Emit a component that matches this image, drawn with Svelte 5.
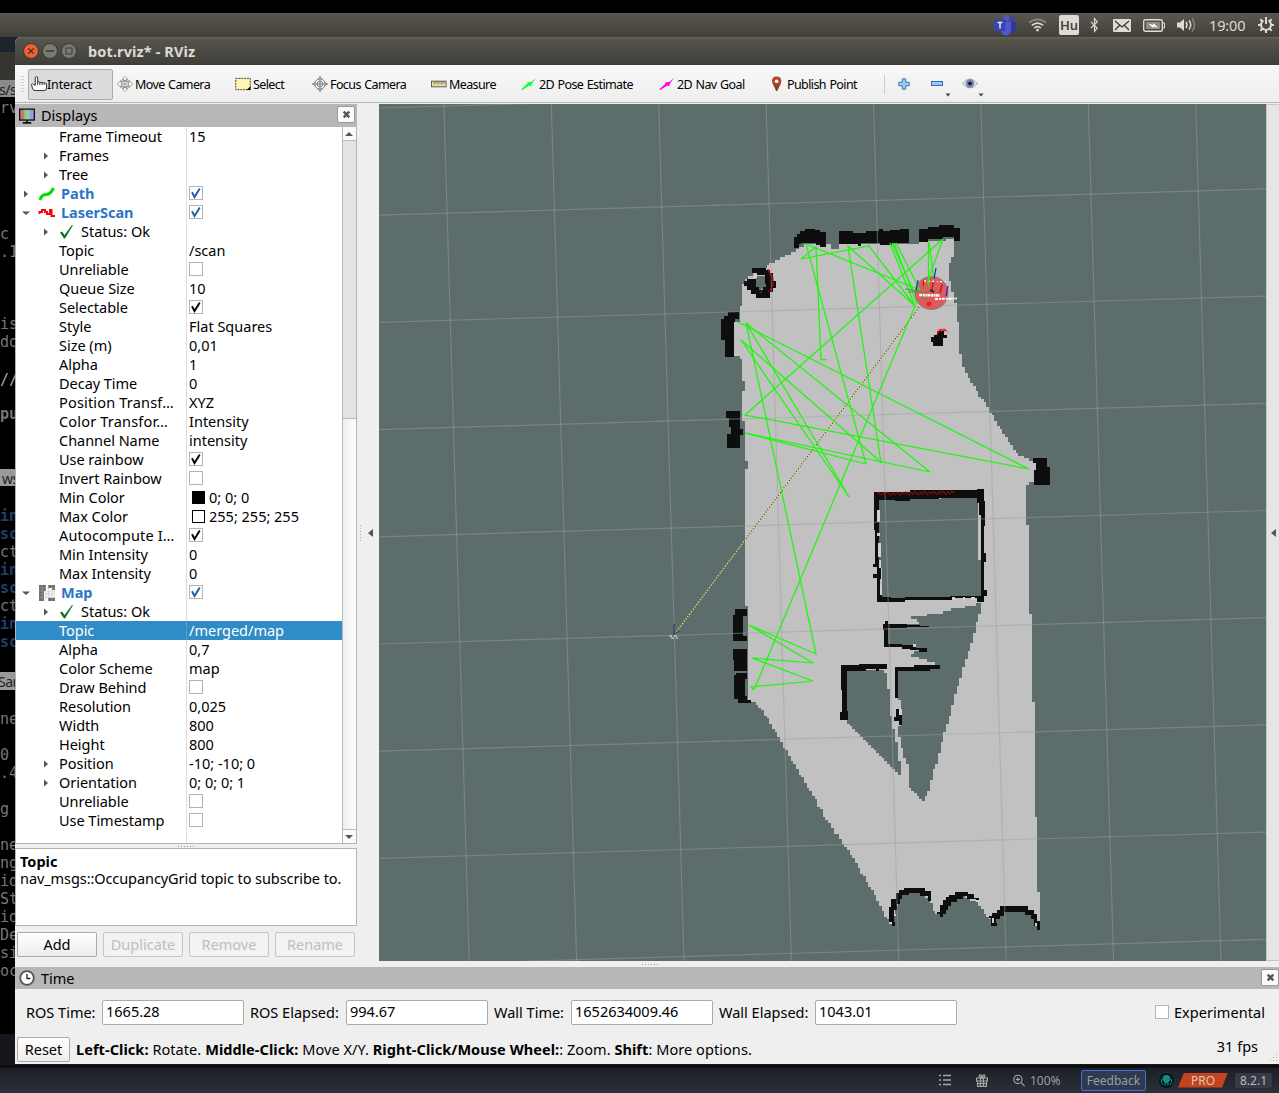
<script>
  const tree = [
    { label: 'Frame Timeout', value: '15' },
    { label: 'Frames', arrow: 'right' },
    { label: 'Tree', arrow: 'right' },
    { label: 'Path', kind: 'display', icon: 'path', arrow: 'right', check: true, blue: true },
    { label: 'LaserScan', kind: 'display', icon: 'scan', arrow: 'down', check: true, blue: true },
    { label: 'Status: Ok', kind: 'status', arrow: 'right' },
    { label: 'Topic', value: '/scan' },
    { label: 'Unreliable', check: false },
    { label: 'Queue Size', value: '10' },
    { label: 'Selectable', check: true },
    { label: 'Style', value: 'Flat Squares' },
    { label: 'Size (m)', value: '0,01' },
    { label: 'Alpha', value: '1' },
    { label: 'Decay Time', value: '0' },
    { label: 'Position Transf…', value: 'XYZ', long: true },
    { label: 'Color Transfor…', value: 'Intensity', long: true },
    { label: 'Channel Name', value: 'intensity' },
    { label: 'Use rainbow', check: true },
    { label: 'Invert Rainbow', check: false },
    { label: 'Min Color', value: '0; 0; 0', swatch: 'dark' },
    { label: 'Max Color', value: '255; 255; 255', swatch: 'light' },
    { label: 'Autocompute I…', check: true, long: true },
    { label: 'Min Intensity', value: '0' },
    { label: 'Max Intensity', value: '0' },
    { label: 'Map', kind: 'display', icon: 'map', arrow: 'down', check: true, blue: true },
    { label: 'Status: Ok', kind: 'status', arrow: 'right' },
    { label: 'Topic', value: '/merged/map', selected: true },
    { label: 'Alpha', value: '0,7' },
    { label: 'Color Scheme', value: 'map' },
    { label: 'Draw Behind', check: false },
    { label: 'Resolution', value: '0,025' },
    { label: 'Width', value: '800' },
    { label: 'Height', value: '800' },
    { label: 'Position', value: '-10; -10; 0', arrow: 'right' },
    { label: 'Orientation', value: '0; 0; 0; 1', arrow: 'right' },
    { label: 'Unreliable', check: false },
    { label: 'Use Timestamp', check: false }
  ];

  // Fragments of the terminal that show beside the window: [text, x, baseline, class]
  const terminal = [
    ['s/s', -1, 95, 'tab'], ['rv', 0, 113, ''], ['c', 0, 239, ''], ['.1', 0, 257, ''], ['is', 0, 329, ''], ['do', 0, 347, ''],
    ['//', 0, 385, 'lite'], ['pu', 0, 419, 'bold'], ['ws', 2, 484, 'tab'], ['in', 0, 521, 'blue'], ['sc', 0, 539, 'blue'],
    ['ct', 0, 557, ''], ['in', 0, 575, 'blue'], ['sc', 0, 593, 'blue'], ['ct', 0, 611, ''], ['in', 0, 629, 'blue'],
    ['sc', 0, 647, 'blue'], ['Sar', -2, 687, 'tab'], ['ne', 0, 724, ''], ['0', 0, 760, ''], ['.4', 0, 778, ''], ['g', 0, 814, ''],
    ['ne', 0, 850, ''], ['ng', 0, 868, ''], ['id', 0, 886, ''], ['St', 0, 904, ''], ['id', 0, 922, ''], ['De', 0, 940, ''],
    ['si', 0, 958, ''], ['oc', 0, 976, '']
  ];

  const fields = [
    ['ROS Time:', '1665.28', 'f1'],
    ['ROS Elapsed:', '994.67', 'f2'],
    ['Wall Time:', '1652634009.46', 'f3'],
    ['Wall Elapsed:', '1043.01', 'f4']
  ];

  // Turns an outline into the staircase of an occupancy grid
  const CELL = 2.68;
  function stair(points) {
    const snap = (v) => Math.round(v / CELL) * CELL;
    const pts = [...points, points[0]];
    let d = '';
    let last = null;
    for (let i = 0; i < pts.length - 1; i++) {
      const [ax, ay] = pts[i];
      const [bx, by] = pts[i + 1];
      const n = Math.max(1, Math.ceil(Math.hypot(bx - ax, by - ay) / CELL));
      for (let k = 0; k <= n; k++) {
        const x = snap(ax + ((bx - ax) * k) / n);
        const y = snap(ay + ((by - ay) * k) / n);
        if (!last) d += `M${x.toFixed(1)} ${y.toFixed(1)}`;
        else if (x !== last[0] || y !== last[1]) d += `H${x.toFixed(1)}V${y.toFixed(1)}`;
        last = [x, y];
      }
    }
    return d + 'Z';
  }

  const free = stair([
    [797, 249], [805, 243], [828, 243], [831, 249], [838, 249], [840, 243], [919, 244], [922, 241], [944, 240], [953, 237],
    [955, 243], [955, 256], [949, 264], [949, 273], [951, 290], [954, 296], [957, 316], [960, 335], [961, 358],
    [964, 370], [972, 385], [985, 405], [1003, 434], [1017, 454], [1030, 460], [1036, 462], [1036, 483],
    [1026, 484], [1028, 530], [1030, 600], [1033, 700], [1035, 762], [1036, 830], [1038, 870], [1039, 922],
    [1035, 920], [1028, 911], [1016, 908], [1000, 911], [995, 922], [990, 919], [978, 901], [962, 895],
    [950, 900], [940, 915], [934, 911], [930, 898], [914, 890], [899, 898], [893, 920], [888, 921],
    [876, 895], [850, 852], [824, 815], [812, 791], [790, 756], [765, 712], [755, 702], [748, 698],
    [748, 608], [745, 604], [745, 475], [747, 468], [743, 410], [744, 382], [741, 358], [735, 356],
    [735, 322], [740, 320], [741, 306], [742, 290], [746, 278], [768, 264], [786, 255]
  ]);
  const holes = [
    [[879, 499], [977, 496], [981, 597], [882, 599], [880, 560]],
    [[982, 603], [945, 612], [912, 618], [920, 624], [888, 627], [888, 645], [918, 650], [912, 656], [934, 664],
      [930, 669], [898, 671], [898, 698], [901, 708], [901, 725], [898, 732], [903, 755], [909, 772], [909, 788],
      [924, 802], [931, 780], [944, 735], [953, 702], [967, 655], [976, 625]],
    [[846, 670], [885, 669], [889, 695], [892, 725], [897, 745], [901, 776], [893, 768], [870, 745], [846, 720]],
    [[755, 276], [760, 275], [766, 275], [766, 288], [762, 291], [755, 289]]
  ].map((p) => stair(p));

  const walls = [
    'M794 237H797V234H800V231H805V229H815V230H820V232H826V247H820V245H816V243H801V244H799V248H794Z',
    'M839 231H853V233H866V231H879V229H883V231H890V230H900V229H909V243H892V245H880V243H861V246H858V244H839Z',
    'M919 229H928V227H939V225H954V228H960V241H954V237H943V239H928V242H919Z',
    'M752 268H766V270H770V273H773V281H776V288H773V292H770V298H756V294H751V290H747V286H744V281H747V279H756V287H759V290H763V287H766V284H765V275H757V273H752Z',
    'M724 316H728V312H739V319H735V322H734V357H725V340H721V319H724Z',
    'M726 411H740V429H743V435H740V448H727V434H731V427H729V418H726Z',
    'M735 609H747V616H743V636H747V641H733V615H735Z',
    'M733 649H747V671H734Z',
    'M736 673H747V679H745V696H747V700H751V703H738V699H734V675H736Z',
    'M1033 458H1047V467H1050V485H1034V470H1036V463H1033Z',
    'M934 335H937V331H944V335H947V338H943V346H933V342H931V337H934Z',
    'M874 492H910V490H977V489H984V501H985V526H984V553H986V562H984V590H987V596H984V602H977V598H952V600H905V602H877V578H873V574H877V567H873V564H875V530H874Z M879 500V564H881V579H880V595H882V597H891V598H905V597H950V596H981V515H979V503H977V498H939V499H910V501Z',
    'M883 624H885V621H888V624H907V625H920V626H929V627H907V628H888V644H902V645H916V648H927V652H919V650H910V649H902V647H884V630H883Z',
    'M841 665H859V664H887V669H879V671H876V669H866V671H847V711H848V720H840V712H842V690H841Z',
    'M895 667H914V665H940V669H930V671H898V698H895Z',
    'M896 709H899V715H902V725H899V721H894V717H896Z',
    'M889 925V907H891V899H896V893H899V890H904V888H925V891H931V901H928V896H920V893H909V895H902V899H900V904H897V910H894V922H895V926H892V924H889Z',
    'M937 912H940V905H943V900H946V897H949V895H955V892H968V894H974V898H979V902H976V899H967V896H963V899H957V902H951V906H948V910H946V914H943V917H940V914H937Z',
    'M989 916H992V913H997V910H1000V906H1028V910H1034V914H1037V921H1040V930H1037V926H1034V919H1031V915H1025V912H1004V916H1000V919H996V923H997V926H991V918H989Z'
  ];

  const rays = [
    '806,244 866,464', '806,244 920,290', '801,259 816,247 821,359.500 827,359.500', '801,259 869,246 915,306',
    '881,463 848,246 915,306', '890,243 915,306', '892,243 913,290', '896,243 920,290', '928.500,242 928.500,286',
    '929,242 934,280', '943,239 745,415 1029,469 738,322', '943,239 927,283', '915,306 754,690', '746,323 816,654 749,625 813,663 752,658 813,681 751,687 754,690',
    '746,323 930,472 745,433', '746,323 849,497', '741,340 882,463', '741,340 849,497', '745,433 866,464', '894,243 917,304'
  ];

  const cols = Array.from({ length: 9 }, (_, i) => 336.5 + i * 107.4);
  const rows = Array.from({ length: 10 }, (_, i) => 108 + i * 107.2);
  const specks = Array.from({ length: 42 }, (_, i) => [877 + i * 1.85, 493 - i * 0.03 + ((i * 7) % 5) * 0.6 - 1]);
</script>

{#snippet tick()}
  <svg viewBox="0 0 12 12"><path d="M2 5.300 4.500 10 9.800 1.500" fill="none" stroke="currentColor" stroke-width="1.900" /></svg>
{/snippet}

{#snippet closeBox()}
  <span class="closebox"><svg viewBox="0 0 16 16"><path d="M5 5l6 6M11 5l-6 6" stroke="#555" stroke-width="2.600" /></svg></span>
{/snippet}

<div class="screen">
  <header class="panel">
    <svg class="teams" viewBox="0 0 22 20">
      <circle cx="18.500" cy="4" r="2.500" fill="#3b41b0" /><path d="M14 7h8v7a4 4 0 0 1-6 3z" fill="#3137a0" />
      <circle cx="12.500" cy="3" r="3" fill="#5059c9" /><path d="M8 7h9v8a5 5 0 0 1-10 1z" fill="#5059c9" />
      <rect y="4.500" width="11.500" height="11.500" rx="1" fill="#3b43b4" /><path d="M3.500 7.500h5M6 7.500v6" stroke="#e4e4f4" stroke-width="1.500" />
    </svg>
    <svg class="wifi" viewBox="0 0 20 14" fill="none" stroke="#dfdbd2" stroke-width="1.700">
      <path d="M1 4.500q9-7 18 0" opacity=".45" /><path d="M4 7.500q6-5 12 0M6.500 10.300q3.500-3 7 0" /><circle cx="10" cy="12.500" r=".6" />
    </svg>
    <span class="lang">Hu</span>
    <svg class="bt" viewBox="0 0 10 16" fill="none" stroke="#dfdbd2" stroke-width="1.300"><path d="M1 4.500l7 7L5 15V1l3 3.500-7 7" /></svg>
    <svg class="mail" viewBox="0 0 18 13"><rect width="18" height="13" rx="1" fill="#dfdbd2" /><path d="M2 2l7 6 7-6M2 11l4.500-4.500M16 11l-4.500-4.500" fill="none" stroke="#3d3c38" stroke-width="1.300" /></svg>
    <svg class="battery" viewBox="0 0 22 13"><rect x=".7" y=".7" width="18.600" height="11.600" rx="1.500" fill="none" stroke="#dfdbd2" stroke-width="1.400" /><rect x="3" y="3" width="14" height="7" fill="#8f8c85" /><path d="M20 4h1.500v5H20" stroke="#dfdbd2" fill="none" /><path d="M5 4.500l5 1.500V4l5.500 5-5-1.500v1.800z" fill="#fff" /></svg>
    <svg class="vol" viewBox="0 0 20 16"><path d="M0 5.500h3L7 2v12L3 10.500H0z" fill="#dfdbd2" /><g fill="none" stroke="#dfdbd2" stroke-width="1.500"><path d="M9 5q2 3 0 6M12 3.500q3.500 4.500 0 9" /><path d="M15 1.500q5 6.500 0 13" opacity=".4" /></g></svg>
    <span class="clock">19:00</span>
    <svg class="gear" viewBox="0 0 16 16" fill="none" stroke="#dfdbd2"><path d="M5.500 3.500a5 5 0 1 0 5 0M8 0v7" stroke-width="1.900" /><path d="M2.300 2.300l2 2M0 8h3M2.300 13.700l2-2M8 13v3M13.700 13.700l-2-2M13 8h3M13.700 2.300l-2 2" stroke-width="2" /></svg>
  </header>

  <div class="desktop">
    <svg class="terminal" viewBox="0 37 15 1027" width="15" height="1027">
      <rect y="37" width="15" height="1027" fill="#000" />
      <rect y="37" width="15" height="15" fill="#1d222c" />
      <rect y="52" width="15" height="28" fill="#353430" />
      <rect y="80" width="15" height="17" fill="#8b8b8b" />
      <rect y="469" width="15" height="17" fill="#9a9a9a" />
      <rect y="672" width="15" height="18" fill="#9a9a9a" />
      <rect y="1034" width="15" height="30" fill="#14161b" />
      {#each terminal as [text, x, y, tone]}<text {x} {y} class={tone}>{text}</text>{/each}
    </svg>

    <section class="window">
      <div class="title">
        <svg viewBox="0 0 54 16" width="54" height="16">
          <circle cx="8" cy="8" r="7.500" fill="#ee5f35" stroke="#3a3934" /><path d="M5.300 5.300l5.400 5.400M10.700 5.300l-5.400 5.400" stroke="#41271c" stroke-width="1.200" />
          <circle cx="27" cy="8" r="7.500" fill="#7b7a72" stroke="#3a3934" /><path d="M23 8h8" stroke="#3a3934" stroke-width="1.300" />
          <circle cx="46" cy="8" r="7.500" fill="#7b7a72" stroke="#3a3934" /><rect x="43" y="5" width="6" height="6" fill="none" stroke="#3a3934" />
        </svg>
        <b>bot.rviz* - RViz</b>
      </div>

      <nav class="toolbar">
        <span class="grip"></span>
        <span class="tool active">
          <svg viewBox="0 0 17 17"><path d="M4.500 10V2a1.300 1.300 0 0 1 2.600 0V6.500q1.500-1 2.300.300 1.300-.8 2.200.4 1.400-.8 2.300.300 2-.6 2.600 1V13q0 2.500-2.500 2.500H4.500Q2 15.500 1.500 13L.500 9q1-1.500 2.300 0z" fill="#fff" stroke="#222" /><path d="M7.100 6.500v3M9.400 7v2.500M11.700 7.500v2M14 7.500v2" stroke="#222" /></svg>Interact</span>
        <span class="tool"><svg viewBox="0 0 17 17" fill="#fff" stroke="#777" stroke-width=".8"><path d="M8.500.500l3 3-2 .5v2l3.500.500-.3-2 3.800 4-3.800 4 .3-2-3.500.500v2l2 .5-3 3-3-3 2-.5v-2L4 10.500l.3 2-3.800-4 3.800-4L4 6.500l3.500-.500v-2l-2-.5z" /><circle cx="8.500" cy="8.500" r="4" fill="none" /><path d="M5 8.500h7M8.500 5v7" /></svg>Move Camera</span>
        <span class="tool"><svg viewBox="0 0 17 17"><rect x=".8" y="2.500" width="15.400" height="12" fill="#fff5ae" stroke="#333" stroke-dasharray="2 1" /><path d="M16.500 11v4h-4z" /></svg>Select</span>
        <span class="tool"><svg viewBox="0 0 17 17" fill="none" stroke="#777"><circle cx="8.500" cy="8.500" r="5.500" /><circle cx="8.500" cy="8.500" r="3" /><path d="M8.500 0v17M0 8.500h17" /><path d="M6.500 3L8.500.500l2 2.500M6.500 14l2 2.500 2-2.500M3 6.500l-2.500 2L3 10.500M14 6.500l2.500 2-2.500 2" stroke-width=".7" /></svg>Focus Camera</span>
        <span class="tool"><svg viewBox="0 0 17 17"><rect x=".5" y="5.500" width="15.500" height="6" fill="#e8e0a0" stroke="#555" /><path d="M3.500 6v3M5.500 6v2M7.500 6v3M9.500 6v2M11.500 6v3M13.500 6v2" stroke="#555" stroke-width=".8" /></svg>Measure</span>
        <span class="tool"><svg viewBox="0 0 17 17"><path d="M0 14.500L7 8 6 6.800l5-.3L16 2l-4 5.500-1.500 4-1.200-1.700-8 5.200z" fill="#0f3" /></svg>2D Pose Estimate</span>
        <span class="tool"><svg viewBox="0 0 17 17"><path d="M0 14.500L7 8 6 6.800l5-.3L16 2l-4 5.500-1.500 4-1.200-1.700-8 5.200z" fill="#f0d" /></svg>2D Nav Goal</span>
        <span class="tool pin"><svg viewBox="0 0 17 17"><path d="M6 0.500q5 0 5 5 0 3-2.500 6.500L6.500 16h-1L4 12Q1 8 1 5.500q0-5 5-5z" fill="#b5482a" /><path d="M2.500 9h7L6.500 16h-1z" fill="#7a4a28" /><circle cx="6" cy="5.500" r="1.900" fill="#fff" /></svg>Publish Point</span>
        <span class="rule"></span>
        <svg class="mini" viewBox="0 0 16 16"><path d="M6 2h4v4h4v4h-4v4H6v-4H2V6h4z" fill="#9fc6f0" stroke="#2f6bb3" /></svg>
        <svg class="mini wide" viewBox="0 0 24 24"><rect x="2.500" y="9.500" width="11" height="4" fill="#9fc6f0" stroke="#2f6bb3" /><path d="M16.500 21.500h5l-2.500 3z" fill="#444" /></svg>
        <svg class="mini wide eye" viewBox="0 0 24 24"><path d="M.500 11.500q7.500-9 15 0-7.500 9-15 0z" fill="#e6e6ea" stroke="#aaa" /><circle cx="8" cy="11.500" r="4.200" fill="#7482b8" /><circle cx="8" cy="11.500" r="1.800" fill="#111" /><path d="M16.500 21.500h5l-2.500 3z" fill="#444" /></svg>
      </nav>

      <div class="main">
        <aside class="dock">
          <div class="dockhead">
            <svg viewBox="0 0 17 17" width="16" height="16"><defs><linearGradient id="rgb"><stop offset=".3" stop-color="#c77" /><stop offset=".34" stop-color="#8c8" /><stop offset=".64" stop-color="#8d8" /><stop offset=".7" stop-color="#99e" /></linearGradient></defs><rect x=".7" y="1.200" width="15.600" height="11.600" fill="url(#rgb)" stroke="#111" stroke-width="1.400" /><path d="M8.500 13v2.500M4 15.800h9" stroke="#111" stroke-width="1.800" /></svg>
            <span>Displays</span>{@render closeBox()}
          </div>
          <div class="treebox">
            <div class="tree">
              {#each tree as row}
                <div class="row {row.kind ?? 'prop'}" class:selected={row.selected}>
                  <div class="name">
                    <span class="arrow">
                      {#if row.arrow === 'right'}<svg viewBox="0 0 8 8"><path d="M2 .500L6 4 2 7.500z" fill="#555" /></svg>{/if}
                      {#if row.arrow === 'down'}<svg viewBox="0 0 8 8"><path d="M0 2.500h8L4 6z" fill="#555" /></svg>{/if}
                    </span>
                    {#if row.icon === 'path'}<svg class="ico" viewBox="0 0 16 16"><path d="M1 14q1.500-5.500 6-5.500T14.500 2" fill="none" stroke="#0d0" stroke-width="3" /></svg>{/if}
                    {#if row.icon === 'scan'}<svg class="ico" viewBox="0 0 16 16"><path d="M.500 9V7H3V5h3v2h2v2h3V5h1.500v6H16" fill="none" stroke="red" stroke-width="1.900" /></svg>{/if}
                    {#if row.icon === 'map'}<svg class="ico" viewBox="0 0 16 16"><path d="M0 0h7v6H5v10H0zM9 0h7v5h-3V3H9zM9 13h7v3H9z" fill="#6c6c6c" /><path d="M7 6h9v7H7z" fill="#eee" /><path d="M0 3h16M0 6h16M0 9h16M0 12.500h16M3 0v16M6.500 0v16M9.500 0v16M13 0v16" stroke="#bbb" stroke-width=".4" /></svg>{/if}
                    {#if row.kind === 'status'}<svg class="ico" viewBox="0 0 16 16"><path d="M1 8.500l2-1L5.500 11 13 1l1 .300L6 14.500H5z" fill="#117317" /></svg>{/if}
                    <span class="text" class:long={row.long}>{row.label}</span>
                  </div>
                  <div class="value">
                    {#if row.check !== undefined}<span class="check" class:blue={row.blue}>{#if row.check}{@render tick()}{/if}</span>{/if}
                    {#if row.swatch}<span class="swatch {row.swatch}"></span>{/if}
                    {row.value ?? ''}
                  </div>
                </div>
              {/each}
            </div>
            <div class="scroll">
              <span class="cap"><svg viewBox="0 0 8 8"><path d="M0 6h8L4 2z" fill="#555" /></svg></span>
              <span class="thumb"></span><span class="track"></span>
              <span class="cap end"><svg viewBox="0 0 8 8"><path d="M0 2h8L4 6z" fill="#555" /></svg></span>
            </div>
          </div>
          <div class="split"><i></i></div>
          <div class="help"><b>Topic</b><span>nav_msgs::OccupancyGrid topic to subscribe to.</span></div>
          <div class="buttons"><button>Add</button><button disabled>Duplicate</button><button disabled>Remove</button><button disabled>Rename</button></div>
        </aside>

        <div class="handle"><i></i><svg viewBox="0 0 5 8"><path d="M5 0v8L0 4z" fill="#555" /></svg></div>

        <svg class="view" viewBox="379 104 887 857" width="887" height="857">
          <rect x="379" y="104" width="887" height="857" fill="#5d6d6b" />
          <g shape-rendering="crispEdges">
            <path d={free} fill="#c1c1c1" />
            {#each holes as d}<path {d} fill="#5d6d6b" />{/each}
            {#each walls as d}<path {d} fill="#0e0e0e" fill-rule="evenodd" />{/each}
            <path d="M877 510h3v12h-3zM877 533h3v3h-3zM878 543h3v14h-3zM879 560h2v8h-2zM880 585h2v10h-2zM952 597h3v3h-3zM963 597h2v3h-2zM971 597h4v3h-4zM913 644h3v3h-3zM894 914h2v2h-2zM889 922h3v2h-3zM992 918h2v5h-2zM1035 923h2v3h-2zM899 709h3v6h-3zM976 900h3v2h-3zM754 275h3v3h-3z" fill="#d0d0d0" />
          </g>
          <g class="grid">
            {#each cols as x}<path d="M{x} 104L{x + 25.3} 961" />{/each}
            {#each rows as y}<path d="M379 {y}L1266 {y - 26.3}" />{/each}
          </g>
          <g class="laser">
            {#each specks as [x, y]}<rect {x} {y} width="1.600" height="1.200" />{/each}
            <path d="M768 269l2 5 3 3v7l-2 5-3 3M760 292h2M937 335l2-5 5-1 4 3M937 332l5-2 3 1" fill="none" stroke="red" stroke-width="1.100" stroke-dasharray="4 1" />
          </g>
          <path d="M674 635L920 306" stroke="#e3dfa0" stroke-width="1.100" /><path d="M674 635L920 306" stroke="#4b4a24" stroke-width="1.100" stroke-dasharray="1.300 1.700" />
          <circle cx="931.500" cy="293" r="16.500" fill="#de5b5b" stroke="#777" stroke-width=".8" />
          <g class="rays">{#each rays as points}<polyline {points} />{/each}</g>
          <g fill="none">
            <path d="M936 268l-2 11M918 280l-2 11M948 286l-2 10" stroke="#2222c4" stroke-width="1.200" />
            <path d="M933 282l-1 8M942 284l-2 9M924 280l-1 6" stroke="#c01818" stroke-width="1.400" />
            <path d="M905 289l14 2M908 292h8M919 293l8-1M922 298l5 2" stroke="#3a9a3a" /><path d="M930 290l4 2" stroke="#333" stroke-width="2" />
            <path d="M919 295l21 .5" stroke="#fff" stroke-width="2.600" stroke-dasharray="3 .7 2 .7 1.500 .5" />
            <path d="M935 299l22-.5" stroke="#fff" stroke-width="2" stroke-dasharray="3 1 2 .8" />
            <path d="M924 281l24 1" stroke="#fff" stroke-width="1.300" stroke-dasharray="2 3 1 2" />
            <circle cx="929" cy="304" r="2.500" fill="#e82222" />
          </g>
          <g fill="none"><path d="M674 635v-11" stroke="#1a2a70" /><path d="M674 634l5-3" stroke="#5a2020" /><path d="M669 636h10M671 638h7" stroke="#eee" stroke-dasharray="3 2" /></g>
        </svg>
        <div class="edge"><svg viewBox="0 0 5 8"><path d="M5 0v8L0 4z" fill="#555" /></svg></div>
      </div>

      <div class="split low"><i></i></div>
      <div class="dockhead timehead">
        <svg viewBox="0 0 16 16" width="16" height="16"><circle cx="8" cy="8" r="6.800" fill="#fff" stroke="#555" stroke-width="1.800" /><path d="M8 4v4.500h3.500" fill="none" stroke="#222" stroke-width="1.300" /></svg>
        <span>Time</span>{@render closeBox()}
      </div>
      <div class="times">
        {#each fields as [label, value, cls]}<label class={cls}><span>{label}</span><span class="input">{value}</span></label>{/each}
        <div class="exp"><span class="check"></span>Experimental</div>
      </div>
      <footer>
        <button>Reset</button>
        <p><b>Left-Click:</b> Rotate. <b>Middle-Click:</b> Move X/Y. <b>Right-Click/Mouse Wheel:</b>: Zoom. <b>Shift</b>: More options.</p>
        <span class="fps">31 fps</span>
        <svg class="corner" viewBox="0 0 8 8" fill="#aaa"><path d="M6 0h1v1H6zM3 3h1v1H3zM6 3h1v1H6zM0 6h1v1H0zM3 6h1v1H3zM6 6h1v1H6z" /></svg>
      </footer>
    </section>
  </div>

  <div class="taskbar">
    <svg class="t-list" viewBox="0 0 12 12" stroke="#a5a6a8" stroke-width="1.500"><path d="M0 1.500h2M4 1.500h8M0 6h2M4 6h8M0 10.500h2M4 10.500h8" /></svg>
    <svg class="t-gift" viewBox="0 0 12 13" fill="none" stroke="#a5a6a8" stroke-width="1.200"><path d="M.6 4h10.800v3H.6zM1.500 7v5.300h9V7M4.500 4v8M7.500 4v8M6 3.500Q2 3 3.500 1 5 0 6 3.500 7 0 8.500 1 10 3 6 3.500M1.500 9.500h9" /></svg>
    <svg class="t-zoom" viewBox="0 0 13 13" fill="none" stroke="#a5a6a8" stroke-width="1.200"><circle cx="5.300" cy="5.300" r="4.500" /><path d="M8.600 8.600l4 4M3 5.300h4.600M5.300 3v4.600" /></svg>
    <span class="pct">100%</span>
    <span class="feedback">Feedback</span>
    <svg class="kraken" viewBox="0 0 17 17"><circle cx="8.500" cy="8.500" r="8" fill="#081214" stroke="#0b3a3b" /><path d="M8.500 3q4 0 4 4 0 2-2 3v3.500H9.300V11H7.700v2.500H6.500V10q-2-1-2-3 0-4 4-4z" fill="#158c80" /><path d="M3.500 7q-1 4 1.500 6M13.500 7q1 4-1.500 6" fill="none" stroke="#158c80" /></svg>
    <span class="pro">PRO</span>
    <span class="ver">8.2.1</span>
  </div>
</div>

<style>
  :global(body) { background: #000; }
  .screen { width: 1279px; height: 1093px; display: flex; flex-direction: column; overflow: hidden; font: 14.500px/19px 'Noto Sans', sans-serif; color: #000; }
  .screen svg { display: block; flex: none; overflow: visible; }
  .panel { margin-top: 13px; height: 24px; flex: none; display: flex; align-items: center; background: linear-gradient(#5a574f, #403f3a); color: #dfdbd2; padding-left: 994px; box-sizing: border-box; }
  .teams { width: 22px; height: 20px; margin-right: 12px; }
  .wifi { width: 19px; height: 14px; margin-right: 12px; }
  .lang { width: 20px; height: 20px; background: #dfdbd2; color: #45433e; border-radius: 2px; text-align: center; font: 600 13px/21px 'Noto Sans', sans-serif; margin-right: 11px; }
  .bt { width: 9px; height: 16px; margin-right: 14px; }
  .mail { width: 18px; height: 13px; margin-right: 12px; }
  .battery { width: 22px; height: 13px; margin-right: 12px; }
  .vol { width: 20px; height: 16px; margin-right: 12px; }
  .clock { width: 37px; margin-right: 12px; font-size: 14.500px; letter-spacing: -.15px; white-space: nowrap; }
  .gear { width: 16px; height: 16px; }
  .desktop { display: flex; height: 1027px; flex: none; background: #1d222c; }
  .screen .terminal { overflow: hidden; }
  .terminal text { font: 15px 'DejaVu Sans Mono', monospace; fill: #777; }
  .terminal .lite { fill: #aaa; }
  .terminal .tab { font: 14px 'Noto Sans', sans-serif; fill: #222; letter-spacing: -.5px; }
  .terminal .bold { font-weight: bold; }
  .terminal .blue { font-weight: bold; fill: #1e3f69; }
  .window { width: 1264px; background: #efefef; display: flex; flex-direction: column; border-top-left-radius: 6px; overflow: hidden; }
  .title { height: 28px; flex: none; box-sizing: border-box; background: linear-gradient(#6a675f 0, #58554e 6%, #3e3d39); color: #dfdbd2; display: flex; align-items: center; padding-left: 7.500px; gap: 11.500px; }
  .title b { font-size: 14.500px; letter-spacing: .12px; }
  .toolbar { flex: none; box-sizing: border-box; background: linear-gradient(#f8f8f8, #eee); border-bottom: 1px solid #b5b5b5; display: grid; grid-template-columns: 13px 85px 118px 77px 119px 90px 138px 112px 117px 13px 32px 33px 30px; align-items: center; font-size: 12.500px; white-space: nowrap; height: 38px; margin-bottom: 1px; padding-top: 1px; }
  .grip { height: 18px; width: 5px; margin-left: 5px; background: radial-gradient(circle, #aaa .6px, transparent .8px) 0 0 / 2.500px 3px; }
  .tool { display: flex; align-items: center; gap: 1px; padding-left: 4px; height: 31px; box-sizing: border-box; letter-spacing: -.6px; word-spacing: .8px; }
  .tool svg { width: 16px; height: 16px; margin-right: 1px; }
  .tool.active { background: #dcdcdc; border: 1px solid #a9a9a9; border-radius: 2px; padding-left: 2px; gap: 0; letter-spacing: -.15px; }
  .tool.active svg { margin-right: 0; }
  .tool.pin svg { margin-right: -1px; }
  .rule { width: 1px; height: 19px; background: #ccc; }
  .mini { width: 14px; height: 14px; }
  .mini.wide { width: 24px; height: 24px; }
  .main { display: flex; height: 857px; flex: none; }
  .dock { width: 342px; display: flex; flex-direction: column; }
  .dockhead { height: 23px; flex: none; background: #b7b7b7; display: flex; align-items: center; gap: 6px; padding: 0 2px 0 4px; box-sizing: border-box; }
  .dockhead > span:not(.closebox) { flex: 1; }
  .closebox { border: 1px solid #999; border-radius: 2px; background: #fafafa; display: flex; box-sizing: border-box; margin-top: -2px; align-items: center; justify-content: center; width: 18px; height: 17px; }
  .closebox svg { width: 15px; height: 15px; }
  .treebox { height: 717px; flex: none; box-sizing: border-box; display: flex; border: solid #b4b4b4; border-width: 0 1px 1px 1px; background: #fff; }
  .tree { width: 326px; flex: none; background: linear-gradient(#ddd, #ddd) 170px 0 / 1px 100% no-repeat; overflow: hidden; }
  .row { display: grid; grid-template-columns: 171px 1fr; height: 19px; }
  .name, .value { display: flex; align-items: center; white-space: nowrap; }
  .name { letter-spacing: -.03px; }
  .value { padding-left: 2px; }
  .row.selected { background: linear-gradient(#57a1d1, #57a1d1) 170px 0 / 1px 100% no-repeat #308cc6; color: #fff; }
  .arrow { width: 8px; margin-left: 26px; margin-right: 9px; }
  .arrow svg { width: 8px; height: 8px; }
  .text.long { letter-spacing: .18px; }
  .display .arrow { margin-left: 6px; }
  .display .text { color: #2a76c6; font-weight: bold; }
  .ico { width: 16px; height: 16px; margin-right: 6px; }
  .check { width: 14px; height: 14px; border: 1px solid #b4b4b4; box-sizing: border-box; background: #fff; display: inline-flex; margin-top: -1px; }
  .check svg { width: 12px; height: 12px; }
  .blue { color: #1f5f9f; }
  .swatch { width: 13px; height: 13px; margin: 0 4px 0 3px; border: 1px solid #000; box-sizing: border-box; background: #fff; }
  .swatch.dark { background: #000; }
  .scroll { width: 14px; box-sizing: border-box; border-left: 1px solid #b9b9b9; display: flex; flex-direction: column; }
  .cap { height: 13px; display: flex; align-items: center; justify-content: center; background: #fafafa; border-bottom: 1px solid #bbb; }
  .cap.end { border-bottom: 0; border-top: 1px solid #bbb; }
  .cap svg { width: 8px; height: 8px; margin-left: -1px; }
  .thumb { height: 277px; background: #e3e3e3; border-bottom: 1px solid #b9b9b9; }
  .track { flex: 1; background: linear-gradient(90deg, #eee, #fff); }
  .split { height: 4px; flex: none; display: flex; justify-content: center; align-items: center; }
  .split i { width: 17px; height: 1px; background: repeating-linear-gradient(90deg, #999 0 1px, transparent 1px 3px); }
  .help { height: 78px; flex: none; box-sizing: border-box; border: 1px solid #b4b4b4; background: #fff; padding: 4px 4px; line-height: 17px; display: flex; flex-direction: column; white-space: nowrap; letter-spacing: -.08px; }
  .help b { letter-spacing: 0; }
  .buttons { display: flex; gap: 6px; padding: 6px 2px 0; }
  button { font: 14.500px/19px 'Noto Sans', sans-serif; color: #000; height: 25px; padding: 0; border: 1px solid #aaa; border-radius: 2px; background: linear-gradient(#fff, #ededed); }
  .buttons button { flex: 1; }
  button:disabled { color: #bebebe; border-color: #c6c6c6; background: #f2f2f2; }
  .handle { width: 22px; display: flex; align-items: center; gap: 7px; padding-left: 3px; box-sizing: border-box; }
  .handle i { width: 1px; height: 16px; background: repeating-linear-gradient(#aaa 0 1px, transparent 1px 3px); }
  .handle svg, .edge svg { width: 5px; height: 8px; }
  .screen .view { overflow: hidden; }
  .grid path { stroke: rgba(160, 160, 160, .46); stroke-width: 1.200; }
  .laser rect { fill: #c80c0c; }
  .rays polyline { fill: none; stroke: #1cf80c; stroke-width: 1.250; }
  .edge { width: 13px; display: flex; align-items: center; padding-left: 4px; box-sizing: border-box; border: 1px solid #c5c5c5; border-right: 0; background: #e5e5e5; }
  .low { height: 6px; padding-left: 6px; }
  .timehead { height: 22px; padding-right: 0; }
  .times { height: 46px; flex: none; display: flex; align-items: center; padding: 0 14px 0 11px; }
  label { display: flex; align-items: center; justify-content: space-between; white-space: nowrap; margin-right: 6px; }
  .f1 { width: 218px; } .f2 { width: 238px; } .f3 { width: 219px; } .f4 { width: 238px; }
  .input { width: 142px; height: 25px; box-sizing: border-box; border: 1px solid #aaa; border-radius: 2px; background: #fff; padding: 1px 0 0 3px; }
  .exp { display: flex; gap: 5px; align-items: center; margin-left: auto; letter-spacing: .06px; }
  footer { flex: 1; display: flex; align-items: center; padding-left: 2px; position: relative; }
  footer button { width: 53px; }
  footer p { margin: 0 0 0 6px; white-space: nowrap; letter-spacing: .065px; }
  .fps { margin-left: auto; margin-right: 21px; margin-top: -7px; }
  .corner { position: absolute; right: 1px; bottom: 2px; width: 8px; height: 8px; }
  .taskbar { flex: 1; background: linear-gradient(#18191e 0, #08080b 3px, #1d1f25 4px, #2c3039); display: flex; align-items: center; padding: 3px 0 0 939px; color: #9d9ea0; font-size: 12px; white-space: nowrap; }
  .t-list { width: 12px; height: 12px; margin-right: 25px; }
  .t-gift { width: 12px; height: 13px; margin-right: 25px; }
  .t-zoom { width: 12px; height: 13px; margin-right: 5px; }
  .pct { width: 51px; }
  .feedback { width: 65px; height: 21px; line-height: 19px; box-sizing: border-box; text-align: center; border: 1px solid #4272cf; border-radius: 2px; background: #2f3a52; margin-right: 12px; }
  .kraken { width: 17px; height: 17px; margin-right: 3px; }
  .pro { width: 50px; height: 15px; line-height: 15px; text-align: center; background: #c44420; color: #dcc6bd; clip-path: polygon(6px 0, 100% 0, calc(100% - 6px) 100%, 0 100%); margin-right: 7px; }
  .ver { width: 37px; height: 15px; line-height: 15px; text-align: center; background: #363a44; border-radius: 2px; color: #bbb; }
</style>
